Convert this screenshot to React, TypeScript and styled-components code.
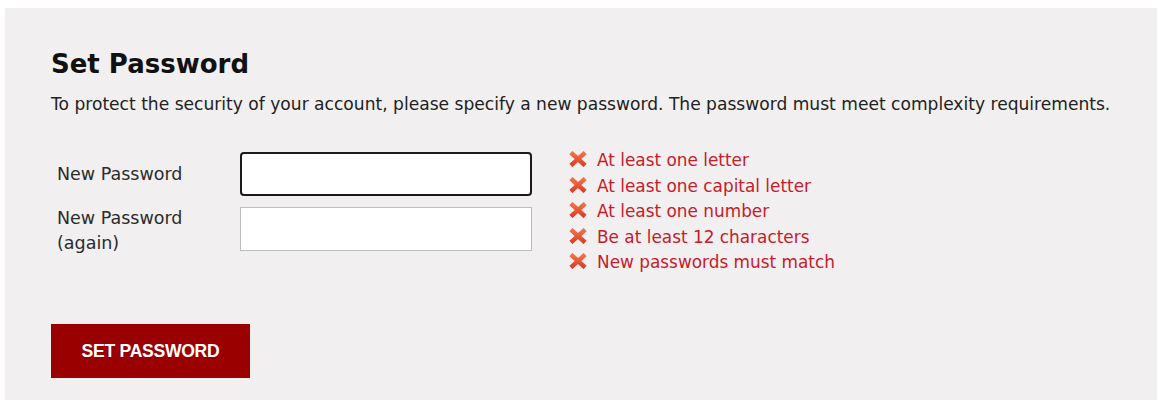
import styled, { createGlobalStyle } from "styled-components";

const GlobalStyle = createGlobalStyle`
  body {
    margin: 0;
    background: #fff;
    font-family: "DejaVu Sans", Verdana, sans-serif;
  }
`;

const Panel = styled.section`
  margin: 8px 2px 0 5px;
  min-height: 392px;
  box-sizing: border-box;
  background: #f1eff0;
  padding: 40px 20px 22px 46px;
  color: #1e1e1e;
`;

const Title = styled.h1`
  margin: 0;
  font-size: 26px;
  line-height: 32px;
  font-weight: bold;
  color: #111;
`;

const Intro = styled.p`
  margin: 12px 0 0;
  font-size: 17.1px;
  line-height: 24px;
  white-space: nowrap;
  color: #222;
`;

const Form = styled.div`
  display: flex;
  align-items: flex-start;
  gap: 37px;
  margin-top: 36px;
`;

const Fields = styled.div`
  display: grid;
  grid-template-columns: 189px 292px;
  row-gap: 11px;
`;

const Label = styled.label<{ $top?: boolean }>`
  padding-left: 6px;
  margin-top: ${(p) => (p.$top ? "-1px" : "0")};
  font-size: 17.5px;
  line-height: 25px;
  color: #2b2b2b;
  align-self: ${(p) => (p.$top ? "start" : "center")};
`;

const Input = styled.input<{ $focused?: boolean }>`
  box-sizing: border-box;
  width: 292px;
  height: 44px;
  margin: 0;
  background: #fff;
  border: ${(p) => (p.$focused ? "2px solid #1a1a1a" : "1px solid #bdbdbd")};
  border-radius: ${(p) => (p.$focused ? "4px" : "0")};
  outline: none;
`;

const Rules = styled.ul`
  list-style: none;
  margin: -4px 0 0;
  padding: 0;
`;

const Rule = styled.li`
  display: flex;
  align-items: center;
  gap: 10px;
  font-size: 16.9px;
  line-height: 25.5px;
  color: #c4202b;

  svg {
    flex: none;
    margin-top: -3px;
  }
`;

const Submit = styled.button`
  display: block;
  margin-top: 48.5px;
  width: 199px;
  height: 54px;
  border: none;
  background: #9b0000;
  color: #fff;
  font-family: "Liberation Sans", Arial, sans-serif;
  font-weight: bold;
  font-size: 17.6px;
  letter-spacing: -0.3px;
`;

function Cross() {
  return (
    <svg width="18" height="16" viewBox="0 0 18 16">
      <defs>
        <linearGradient id="crossFill" x1="0" y1="0" x2="0" y2="16" gradientUnits="userSpaceOnUse">
          <stop offset="0" stopColor="#f47a4c" />
          <stop offset="1" stopColor="#d63a22" />
        </linearGradient>
      </defs>
      <path d="M3.5 3 L14.5 13 M14.5 3 L3.5 13" stroke="url(#crossFill)" strokeWidth="4.4" strokeLinecap="square" />
    </svg>
  );
}

const rules = [
  "At least one letter",
  "At least one capital letter",
  "At least one number",
  "Be at least 12 characters",
  "New passwords must match",
];

export default function App() {
  return (
    <>
      <GlobalStyle />
      <Panel>
        <Title>Set Password</Title>
        <Intro>
          To protect the security of your account, please specify a new password. The password must meet complexity
          requirements.
        </Intro>
        <Form>
          <Fields>
            <Label>New Password</Label>
            <Input type="password" $focused />
            <Label $top>
              New Password
              <br />
              (again)
            </Label>
            <Input type="password" />
          </Fields>
          <Rules>
            {rules.map((r) => (
              <Rule key={r}>
                <Cross />
                {r}
              </Rule>
            ))}
          </Rules>
        </Form>
        <Submit>SET PASSWORD</Submit>
      </Panel>
    </>
  );
}
